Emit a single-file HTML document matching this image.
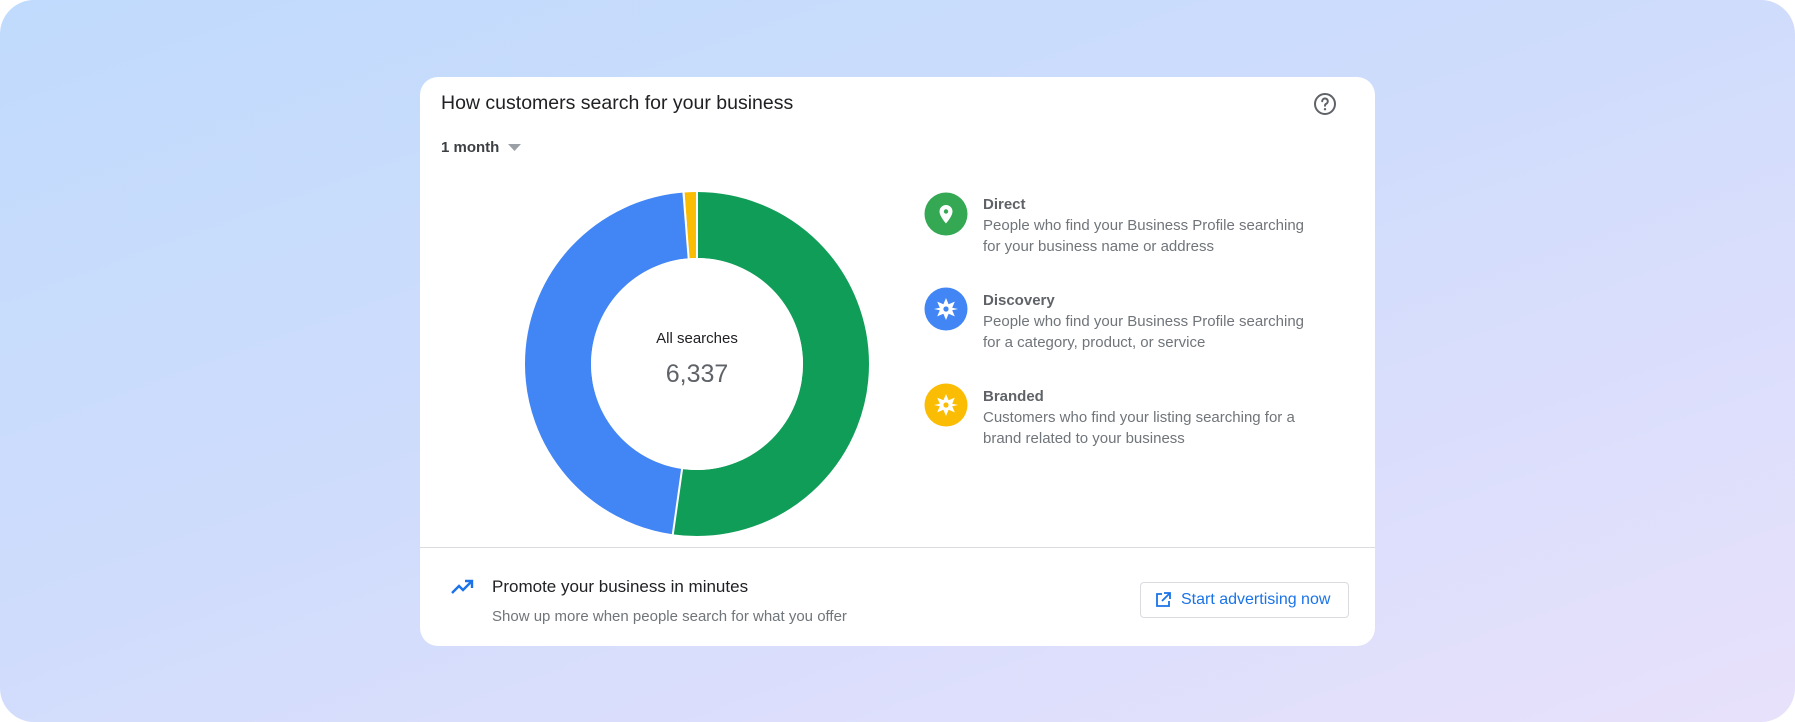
<!DOCTYPE html>
<html><head><meta charset="utf-8"><style>
html,body{margin:0;padding:0;width:1795px;height:722px;background:#fff;overflow:hidden;font-family:"Liberation Sans",Roboto,Arial,sans-serif}
.bg{position:absolute;left:0;top:0;width:1795px;height:722px;border-radius:34px;background:linear-gradient(160deg,#c0dbfd 0%,#cfdcfc 45%,#e8e1fb 100%)}
.card{position:absolute;left:420px;top:77px;width:955px;height:569px;background:#fff;border-radius:18px;overflow:hidden}
.a{position:absolute;white-space:nowrap}
.t{color:#202124}
.g{color:#70757a}
</style></head><body>
<div class="bg"></div>
<div class="card">
 <div class="a t" style="left:21px;top:15px;font-size:19.5px;">How customers search for your business</div>
 <svg class="a" style="left:893px;top:15px" width="24" height="24" viewBox="0 0 24 24"><circle cx="12" cy="12" r="10" fill="none" stroke="#5f6368" stroke-width="2"/><path d="M9.2 9.3a2.8 2.8 0 1 1 4 2.5c-.9.5-1.2 1-1.2 2" fill="none" stroke="#5f6368" stroke-width="2" stroke-linecap="round"/><circle cx="12" cy="17.2" r="1.2" fill="#5f6368"/></svg>
 <div class="a t" style="left:21px;top:62px;font-size:15px;font-weight:bold;color:#3c4043">1 month</div>
 <svg class="a" style="left:88px;top:67px" width="14" height="8"><path d="M0 0h13l-6.5 7z" fill="#9aa0a6"/></svg>
 <svg class="a" style="left:0;top:0" width="955" height="470">
  <g transform="translate(277,287) rotate(-90)">
   <circle r="139" fill="none" stroke="#0f9d58" stroke-width="66" stroke-dasharray="456 1000" stroke-dashoffset="0"/>
   <circle r="139" fill="none" stroke="#4285f4" stroke-width="66" stroke-dasharray="406 1000" stroke-dashoffset="-456.5"/>
   <circle r="139" fill="none" stroke="#fbbc04" stroke-width="66" stroke-dasharray="10.5 1000" stroke-dashoffset="-862.9"/>
  </g>
  <g stroke="#fff" stroke-width="2">
   <line x1="277" y1="287" x2="277" y2="110"/>
   <line x1="277" y1="287" x2="252" y2="463"/>
   <line x1="277" y1="287" x2="263" y2="110"/>
  </g>
  <circle cx="277" cy="287" r="106" fill="#fff"/>
 </svg>
 <div class="a t" style="left:177px;top:253px;width:200px;text-align:center;font-size:15px;">All searches</div>
 <div class="a g" style="left:177px;top:283px;width:200px;text-align:center;font-size:25px;color:#5f6368">6,337</div>

 <svg class="a" style="left:504px;top:115px" width="44" height="44"><circle cx="22" cy="22" r="21.5" fill="#34a853"/><path d="M22 13a6.5 6.5 0 0 0-6.5 6.5c0 4.8 6.5 12 6.5 12s6.5-7.2 6.5-12A6.5 6.5 0 0 0 22 13z" fill="#fff"/><circle cx="22" cy="19.5" r="2.2" fill="#34a853"/></svg>
 <svg class="a" style="left:504px;top:210px" width="44" height="44"><circle cx="22" cy="22" r="21.5" fill="#4285f4"/><path d="M22 11l2.6 6.2 6.2-2.6-2.6 6.2L34 22l-5.8 1.2 2.6 6.2-6.2-2.6L22 33l-2.6-6.2-6.2 2.6 2.6-6.2L10 22l5.8-1.2-2.6-6.2 6.2 2.6z" fill="#fff"/><circle cx="22" cy="22" r="2.6" fill="#4285f4"/></svg>
 <svg class="a" style="left:504px;top:306px" width="44" height="44"><circle cx="22" cy="22" r="21.5" fill="#fbbc04"/><path d="M22 11l2.6 6.2 6.2-2.6-2.6 6.2L34 22l-5.8 1.2 2.6 6.2-6.2-2.6L22 33l-2.6-6.2-6.2 2.6 2.6-6.2L10 22l5.8-1.2-2.6-6.2 6.2 2.6z" fill="#fff"/><circle cx="22" cy="22" r="2.6" fill="#fbbc04"/></svg>

 <div class="a g" style="left:563px;top:117px;font-size:15px;line-height:21px">
  <b style="color:#5f6368">Direct</b><br>People who find your Business Profile searching<br>for your business name or address</div>
 <div class="a g" style="left:563px;top:213px;font-size:15px;line-height:21px">
  <b style="color:#5f6368">Discovery</b><br>People who find your Business Profile searching<br>for a category, product, or service</div>
 <div class="a g" style="left:563px;top:309px;font-size:15px;line-height:21px">
  <b style="color:#5f6368">Branded</b><br>Customers who find your listing searching for a<br>brand related to your business</div>

 <div class="a" style="left:0;top:470px;width:955px;height:1px;background:#dadce0"></div>
 <svg class="a" style="left:30px;top:501px" width="24" height="18" viewBox="0 0 24 18"><path d="M2 15l7-7 4 4 8-8" fill="none" stroke="#1a73e8" stroke-width="2.4"/><path d="M15 3h7v7" fill="none" stroke="#1a73e8" stroke-width="2.4"/></svg>
 <div class="a t" style="left:72px;top:500px;font-size:17px;">Promote your business in minutes</div>
 <div class="a g" style="left:72px;top:531px;font-size:15px;">Show up more when people search for what you offer</div>
 <div class="a" style="left:720px;top:505px;width:209px;height:36px;border:1px solid #dadce0;border-radius:4px;box-sizing:border-box"></div>
 <svg class="a" style="left:734px;top:514px" width="18" height="18" viewBox="0 0 18 18"><path d="M8 3H3v12h12v-5" fill="none" stroke="#1a73e8" stroke-width="1.8"/><path d="M10 2h6v6M16 2L8 10" fill="none" stroke="#1a73e8" stroke-width="1.8"/></svg>
 <div class="a" style="left:761px;top:514px;font-size:16px;color:#1a73e8">Start advertising now</div>
</div>
</body></html>
